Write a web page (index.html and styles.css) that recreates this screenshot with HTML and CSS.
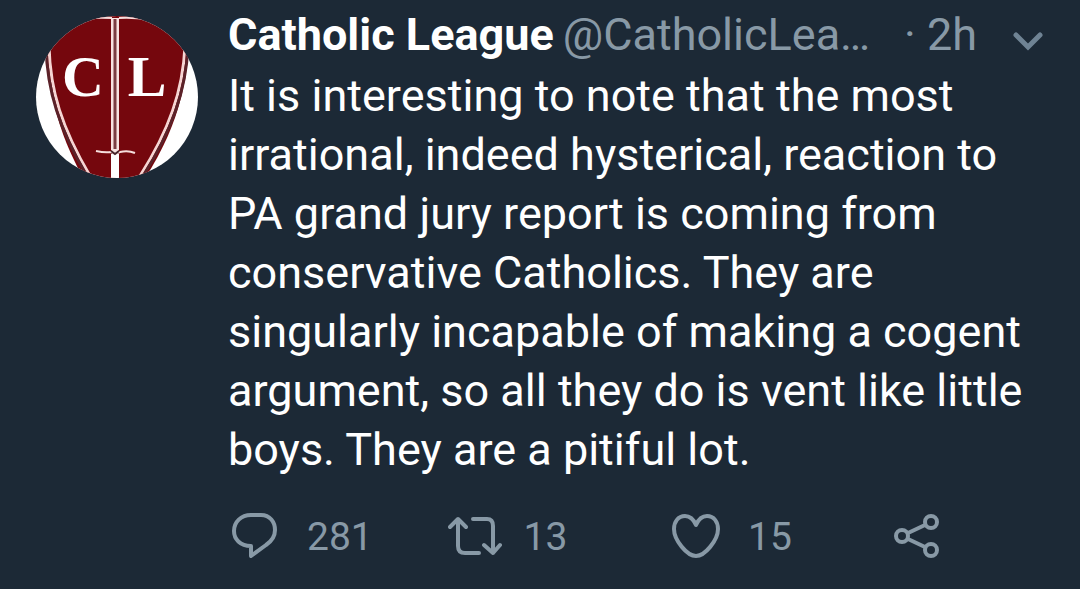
FILE: index.html
```html
<!DOCTYPE html>
<html lang="en">
<head>
    <meta charset="UTF-8">
    <meta name="viewport" content="width=device-width, initial-scale=1.0">
    <title>Catholic League</title>
    <link rel="stylesheet" href="styles.css">
</head>
<body>
    <article class="tweet">
        <a class="avatar" href="#" aria-label="Catholic League">
            <svg viewBox="0 0 162 162">
                <rect width="162" height="162" fill="#fff"/>
                <path d="M8 0H154C154 55 146 105 109 162H47C22 115 10 75 8 0Z" fill="#75070d"/>
                <path d="M13 30C14 75 26 112 54 160M149 30C147 75 133 114 104 160" fill="none" stroke="#f6d5d3" stroke-width="3"/>
                <path d="M10 30C11 75 23 112 51 160M152 30C150 75 136 114 107 160" fill="none" stroke="#5b2229" stroke-width="3"/>
                <path d="M35 4Q55 1 76 2M83 2Q102 1 122 5" fill="none" stroke="#f6dedd" stroke-width="2"/>
                <path d="M75 2H83V134L79 138L75 134Z" fill="#f9e4e2"/>
                <path d="M79 3V133" stroke="#7d3d42" stroke-width="3"/>
                <path d="M75 138H83V162H75Z" fill="#fff"/>
                <path d="M60 135Q69 137 75 136L79 138L84 136Q92 134 99 137" fill="none" stroke="#f6dedd" stroke-width="2"/>
                <path d="M75 135L79 138L83 135" fill="none" stroke="#47252b" stroke-width="2"/>
                <text class="initial" x="47" y="80">C</text>
                <text class="initial" x="111" y="80">L</text>
            </svg>
        </a>
        <div class="content">
            <header class="header">
                <a class="name" href="#">Catholic League</a>
                <a class="handle" href="#">@CatholicLea…</a>
                <span class="time">· 2h</span>
                <button class="more" type="button" aria-label="More">
                    <svg width="32" height="20" viewBox="0 0 32 20"><path d="M4 4L16 16L28 4" fill="none" stroke="#6f8394" stroke-width="5" stroke-linecap="round"/></svg>
                </button>
            </header>
            <p class="text">It is interesting to note that the most irrational, indeed hysterical, reaction to PA grand jury report is coming from conservative Catholics. They are singularly incapable of making a cogent argument, so all they do is vent like little boys. They are a pitiful lot.</p>
            <footer class="actions">
                <button class="action" type="button" aria-label="Reply, 281">
                    <svg class="icon" width="54" height="46" viewBox="0 0 54 46"><path d="M20 2H30C39 2 44 9 44 17C44 23 41 28 35 32L20 43V33C9 33 3 26 3 18C3 9 10 2 20 2Z"/></svg>
                    <span>281</span>
                </button>
                <button class="action" type="button" aria-label="Retweet, 13">
                    <svg class="icon" width="54" height="46" viewBox="0 0 54 46"><path d="M2 14L10 6L18 14M10 7V33Q10 40 17 40H31M25 6H39Q45 6 45 13V40M36 32L45 40L52 32"/></svg>
                    <span>13</span>
                </button>
                <button class="action" type="button" aria-label="Like, 15">
                    <svg class="icon" width="54" height="46" viewBox="0 0 54 46"><path d="M24 12C21 5 17 3 13 3C6 3 2 9 2 16C2 27 15 43 24 43C33 43 46 27 46 16C46 9 42 3 35 3C31 3 27 5 24 12Z"/></svg>
                    <span>15</span>
                </button>
                <button class="action" type="button" aria-label="Share">
                    <svg class="icon" width="54" height="46" viewBox="0 0 54 46"><circle cx="9" cy="23" r="6"/><circle cx="38" cy="9" r="6"/><circle cx="38" cy="37" r="6"/><path d="M15 20L32 12M15 26L32 34"/></svg>
                </button>
            </footer>
        </div>
    </article>
</body>
</html>
```
FILE: styles.css
```css
* {
    box-sizing: border-box;
}
body {
    margin: 0;
    background-color: #1c2936;
    color: #fff;
    font-family: Roboto, "Liberation Sans", sans-serif;
}
a {
    color: inherit;
    text-decoration: none;
}
button {
    padding: 0;
    border: none;
    background: none;
    color: inherit;
    font: inherit;
    cursor: pointer;
}
svg {
    display: block;
}
.tweet {
    display: flex;
    gap: 30px;
    padding: 6px 36px 24px;
}
.avatar {
    flex: none;
    width: 162px;
    height: 162px;
    margin-top: 10px;
    border-radius: 50%;
    overflow: hidden;
}
.initial {
    fill: #fff;
    font-family: "Liberation Serif", serif;
    font-size: 58px;
    font-weight: bold;
    text-anchor: middle;
}
.content {
    flex: 1;
    min-width: 0;
}
.header {
    display: flex;
    align-items: center;
    font-size: 45px;
    line-height: 58px;
    margin-bottom: 2px;
    white-space: nowrap;
}
.name {
    font-weight: bold;
}
.handle {
    margin-left: 9px;
    color: #8899a6;
}
.time {
    margin-left: auto;
    color: #8899a6;
}
.more {
    margin-left: 35px;
    padding-top: 12px;
}
.text {
    margin: 0;
    font-size: 45px;
    line-height: 59px;
}
.actions {
    display: grid;
    grid-template-columns: 216fr 224fr 220fr 154fr;
    margin-top: 32px;
    color: #8899a6;
    font-size: 39px;
    line-height: 46px;
}
.action {
    display: flex;
    align-items: center;
    gap: 22px;
    padding-left: 3px;
}
.action span {
    padding-top: 3px;
}
.icon {
    fill: none;
    stroke: currentColor;
    stroke-width: 4;
    stroke-linecap: round;
    stroke-linejoin: round;
}
```
